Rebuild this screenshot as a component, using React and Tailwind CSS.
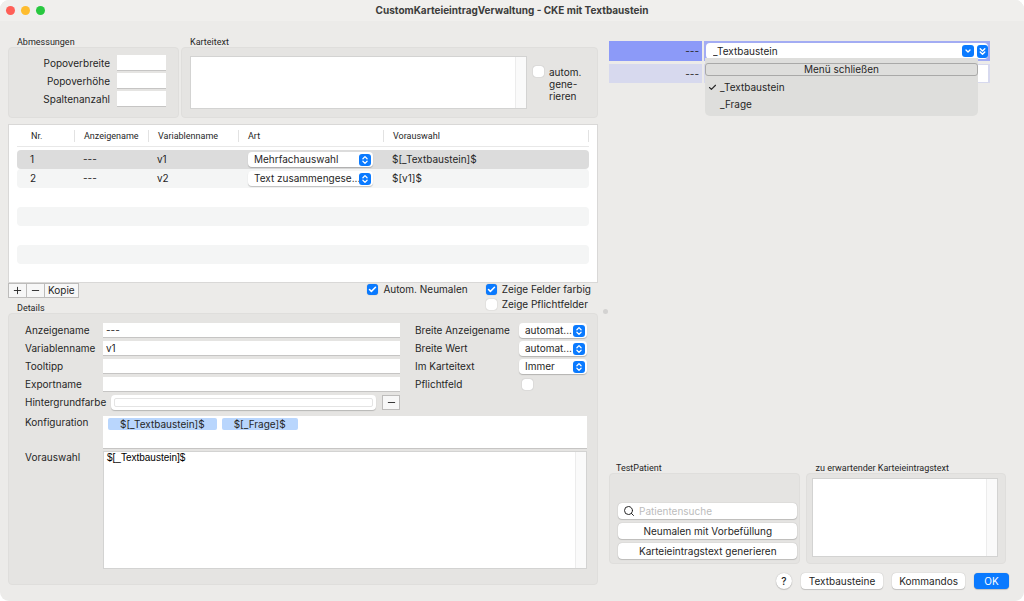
import { useState } from "react";
import { Check, ChevronDown, ChevronsDown, ChevronsUpDown, Minus, Plus, Search } from "lucide-react";
import clsx from "clsx";

const ROWS = [
  { nr: 1, anzeige: "---", variable: "v1", art: "Mehrfachauswahl", vorauswahl: "$[_Textbaustein]$" },
  { nr: 2, anzeige: "---", variable: "v2", art: "Text zusammengese...", vorauswahl: "$[v1]$" },
];

const EMPTY_ROWS = [3, 4, 5, 6];

const TOKENS = ["$[_Textbaustein]$", "$[_Frage]$"];

function Group({ title, className, titleClass, boxClass, children }) {
  return (
    <section className={clsx("flex flex-col", className)}>
      <h2 className={clsx("h-3 font-[Roboto,sans-serif] text-[9px] leading-[14px]", titleClass || "pl-[9px]")}>{title}</h2>
      <div className={clsx("flex-1 rounded-[4px] border border-[#dfdedc] bg-[#e5e4e2]", boxClass)}>{children}</div>
    </section>
  );
}

function TextField({ id, className, ...props }) {
  return (
    <input
      id={id}
      type="text"
      className={clsx("min-w-0 border-b border-[#c6c5c4] bg-white px-[3px] outline-none", className)}
      {...props}
    />
  );
}

function ScrollArea({ id, label, value, className }) {
  return (
    <div className={clsx("flex border border-[#d3d3d2] bg-white", className)}>
      <textarea
        id={id}
        aria-label={label}
        defaultValue={value}
        className="min-w-0 flex-1 resize-none overflow-hidden bg-white px-[3px] font-['Liberation_Sans',sans-serif] text-[10px] leading-3 text-black outline-none"
      />
      <div className="w-[11px] border-l border-[#ececec] bg-[#fafafa]" />
    </div>
  );
}

function PopUp({ id, label, options, className }) {
  return (
    <div className={clsx("relative", className)}>
      <select
        id={id}
        aria-label={label}
        className="block h-[15px] w-full appearance-none rounded-[4px] bg-white pl-[6px] pr-3 leading-[15px] shadow-[0_1px_1px_rgba(0,0,0,0.22)] outline-none"
      >
        {options.map((o) => (
          <option key={o}>{o}</option>
        ))}
      </select>
      <span className="pointer-events-none absolute right-[2px] top-[2px] flex h-3 w-3 items-center justify-center rounded-[3px] bg-[#0a7aff] text-white">
        <ChevronsUpDown size={10} strokeWidth={3} />
      </span>
    </div>
  );
}

function CheckBox({ id, checked, label, children }) {
  const [on, setOn] = useState(!!checked);
  return (
    <label htmlFor={id} className="flex gap-[5px]">
      <span className="relative h-[11px] w-[11px] shrink-0">
        <input
          id={id}
          type="checkbox"
          aria-label={label}
          checked={on}
          onChange={(e) => setOn(e.target.checked)}
          className="block h-[11px] w-[11px] appearance-none rounded-[3px] bg-white shadow-[0_0_1px_rgba(0,0,0,0.35)] checked:bg-[#0a7aff]"
        />
        {on && <Check size={9} strokeWidth={4} className="pointer-events-none absolute left-px top-px text-white" />}
      </span>
      {children}
    </label>
  );
}

function PushButton({ className, children }) {
  return (
    <button
      type="button"
      className={clsx(
        "flex h-4 items-center justify-center rounded-[4px] shadow-[0_0_1px_rgba(0,0,0,0.3),0_1px_1px_rgba(0,0,0,0.15)]",
        className
      )}
    >
      {children}
    </button>
  );
}

function TitleBar() {
  return (
    <header className="grid h-[21px] shrink-0 grid-cols-[1fr_auto_1fr] items-center bg-[#f0efed]">
      <div className="flex gap-[6px] pl-[6px]">
        <button type="button" aria-label="Schließen" className="h-[9px] w-[9px] rounded-full bg-[#ff5f57]" />
        <button type="button" aria-label="Minimieren" className="h-[9px] w-[9px] rounded-full bg-[#febc2e]" />
        <button type="button" aria-label="Vergrößern" className="h-[9px] w-[9px] rounded-full bg-[#28c840]" />
      </div>
      <h1 className="text-[10px] font-bold text-[#3c3c3b]">CustomKarteieintragVerwaltung - CKE mit Textbaustein</h1>
    </header>
  );
}

function VariablenTable() {
  return (
    <div className="mt-[6px] h-[159px] border border-[#d9d8d7] bg-white px-2">
      <table className="w-full table-fixed border-separate border-spacing-0">
        <colgroup>
          <col className="w-[58px]" />
          <col className="w-[74px]" />
          <col className="w-[90px]" />
          <col className="w-[145px]" />
          <col />
        </colgroup>
        <thead>
          <tr className="text-left font-[Roboto,sans-serif] text-[9px] [&>th]:h-[21px] [&>th]:p-0 [&>th]:font-normal [&>th>span]:block [&>th>span]:border-r [&>th>span]:border-[#e2e2e2] [&>th>span]:leading-3">
            <th><span className="pl-[14px]">Nr.</span></th>
            <th><span className="pl-[9px]">Anzeigename</span></th>
            <th><span className="pl-[9px]">Variablenname</span></th>
            <th><span className="pl-[9px]">Art</span></th>
            <th><span className="pl-[9px]">Vorauswahl</span></th>
          </tr>
          <tr aria-hidden="true">
            <td colSpan={5} className="h-1 border-t border-[#e8e8e8] p-0" />
          </tr>
        </thead>
        <tbody>
          {ROWS.map((r, i) => (
            <tr
              key={r.nr}
              className={clsx(
                "[&>td]:h-[19px] [&>td]:p-0 [&>td:first-child]:rounded-l-[4px] [&>td:last-child]:rounded-r-[4px]",
                i === 0 ? "bg-[#dcdcdc]" : "bg-[#f4f5f5]"
              )}
            >
              <td><span className="pl-[13px]">{r.nr}</span></td>
              <td><span className="pl-[8px]">{r.anzeige}</span></td>
              <td><span className="pl-[8px]">{r.variable}</span></td>
              <td>
                <PopUp label={`Art ${r.variable}`} options={[r.art]} className="ml-[9px] mr-[11px]" />
              </td>
              <td><span className="pl-[8px]">{r.vorauswahl}</span></td>
            </tr>
          ))}
          {EMPTY_ROWS.map((n) => (
            <tr key={n} className={n % 2 === 0 ? "bg-[#f4f5f5]" : "bg-white"}>
              <td colSpan={5} className="h-[19px] rounded-[4px] p-0" />
            </tr>
          ))}
        </tbody>
      </table>
    </div>
  );
}

function ListToolbar() {
  return (
    <div className="flex h-[18px] items-start justify-between pr-[7px]">
      <div className="flex h-[15px] divide-x divide-[#bdbcbb] border border-[#bdbcbb] bg-[#f7f7f7]">
        <button type="button" aria-label="Hinzufügen" className="flex w-[18px] items-center justify-center">
          <Plus size={11} />
        </button>
        <button type="button" aria-label="Entfernen" className="flex w-[18px] items-center justify-center">
          <Minus size={11} />
        </button>
        <button type="button" className="px-[3px] leading-[13px]">Kopie</button>
      </div>
      <div className="flex gap-[18px] pt-px leading-[11px]">
        <CheckBox id="neumalen" checked>Autom. Neumalen</CheckBox>
        <div className="flex flex-col gap-1">
          <CheckBox id="farbig" checked>Zeige Felder farbig</CheckBox>
          <CheckBox id="pflichtfelder">Zeige Pflichtfelder</CheckBox>
        </div>
      </div>
    </div>
  );
}

function Details() {
  return (
    <Group title="Details" className="flex-1" boxClass="flex flex-col pl-4 pr-[10px] pt-[9px] pb-[15px]">
      <div className="flex gap-[15px]">
        <div className="grid flex-1 auto-rows-[15px] grid-cols-[78px_1fr] gap-y-[3px] leading-[15px]">
          <label htmlFor="anzeigename">Anzeigename</label>
          <TextField id="anzeigename" defaultValue="---" />
          <label htmlFor="variablenname">Variablenname</label>
          <TextField id="variablenname" defaultValue="v1" />
          <label htmlFor="tooltipp">Tooltipp</label>
          <TextField id="tooltipp" />
          <label htmlFor="exportname">Exportname</label>
          <TextField id="exportname" />
          <span>Hintergrundfarbe</span>
          <div className="flex gap-[6px] pl-2">
            <button
              type="button"
              aria-label="Hintergrundfarbe"
              className="flex-1 rounded-[4px] bg-white p-[3px] shadow-[0_1px_1px_rgba(0,0,0,0.2)]"
            >
              <span className="block h-[9px] rounded-[2px] border border-[#e4e4e4]" />
            </button>
            <button
              type="button"
              aria-label="Farbe entfernen"
              className="flex w-[18px] items-center justify-center border border-[#bdbcbb] bg-[#f7f7f7]"
            >
              <Minus size={11} />
            </button>
          </div>
        </div>
        <div className="grid w-[172px] auto-rows-[15px] grid-cols-[104px_68px] content-start gap-y-[3px] leading-[15px]">
          <label htmlFor="breite-name">Breite Anzeigename</label>
          <PopUp id="breite-name" options={["automat..."]} />
          <label htmlFor="breite-wert">Breite Wert</label>
          <PopUp id="breite-wert" options={["automat..."]} />
          <label htmlFor="im-karteitext">Im Karteitext</label>
          <PopUp id="im-karteitext" options={["Immer"]} />
          <label htmlFor="pflichtfeld">Pflichtfeld</label>
          <div className="pl-[3px] pt-[2px]">
            <CheckBox id="pflichtfeld" />
          </div>
        </div>
      </div>
      <div className="mt-[6px] grid flex-1 grid-cols-[78px_1fr] grid-rows-[33px_1fr] gap-y-[2px] leading-3">
        <span>Konfiguration</span>
        <div className="flex items-start gap-[5px] border-b border-[#c6c5c4] bg-white px-[5px] pt-[2px]">
          {TOKENS.map((t) => (
            <span key={t} className="rounded-[2px] bg-[#b9d6fd] px-3">{t}</span>
          ))}
        </div>
        <label htmlFor="vorauswahl">Vorauswahl</label>
        <ScrollArea id="vorauswahl" value="$[_Textbaustein]$" />
      </div>
    </Group>
  );
}

function Vorschau() {
  const [open, setOpen] = useState(true);
  const [value, setValue] = useState("_Textbaustein");
  return (
    <div className="mr-[19px] mt-5 grid grid-cols-[93px_1fr] grid-rows-[20px_19px] gap-x-[2px] gap-y-[3px] leading-5">
      <label htmlFor="feld-1" className="bg-[#8c9af8] pr-[3px] text-right">---</label>
      <div className="relative bg-[#a3acf3] px-[2px] py-[2px]">
        <div className="flex h-4 items-center gap-[3px] rounded-[4px] bg-white">
          <input
            id="feld-1"
            value={value}
            onChange={(e) => setValue(e.target.value)}
            className="min-w-0 flex-1 bg-transparent pl-[7px] outline-none"
          />
          <button
            type="button"
            aria-label="Menü öffnen"
            onClick={() => setOpen(!open)}
            className="flex h-3 w-3 items-center justify-center rounded-[3px] bg-[#0a7aff] text-white"
          >
            <ChevronDown size={8} strokeWidth={4} />
          </button>
          <button
            type="button"
            aria-label="Alle anzeigen"
            className="flex h-[13px] w-[11px] items-center justify-center rounded-[3px] bg-[#0a7aff] text-white"
          >
            <ChevronsDown size={11} strokeWidth={3} />
          </button>
        </div>
        {open && (
          <div className="absolute left-px right-[12px] top-[17px] z-10 rounded-b-[5px] bg-[#dededc] pb-[3px] pt-[5px]">
            <button
              type="button"
              onClick={() => setOpen(false)}
              className="block h-[13px] w-full rounded-[3px] border border-[#a9a9a8] leading-[11px]"
            >
              Menü schließen
            </button>
            <ul className="pt-[3px] leading-[17px]">
              {["_Textbaustein", "_Frage"].map((o) => (
                <li key={o}>
                  <button type="button" onClick={() => setValue(o)} className="flex w-full items-center pl-[3px] text-left">
                    <span className="w-3">{o === value && <Check size={9} strokeWidth={3} />}</span>
                    {o}
                  </button>
                </li>
              ))}
            </ul>
          </div>
        )}
      </div>
      <label htmlFor="feld-2" className="bg-[#d7d9ee] pr-[3px] text-right">---</label>
      <div className="flex bg-[#d7d9ee] px-[2px] py-px">
        <input id="feld-2" className="min-w-0 flex-1 bg-white outline-none" />
      </div>
    </div>
  );
}

export default function App() {
  return (
    <div className="bg-white">
      <div className="flex min-h-screen flex-col overflow-hidden rounded-[9px] bg-[#ecebe9] font-[Inter,sans-serif] text-[10px] text-[#262626]">
        <TitleBar />
        <main className="grid flex-1 grid-cols-[minmax(0,590fr)_11px_minmax(0,400fr)] pl-2 pr-[15px]">
          <div className="flex flex-col pb-4 pt-[14px]">
            <div className="flex gap-[2px]">
              <Group title="Abmessungen" className="w-[171px]" boxClass="flex flex-col gap-[2px] py-[7px] pr-3">
                {["Popoverbreite", "Popoverhöhe", "Spaltenanzahl"].map((l) => (
                  <div key={l} className="flex h-4 items-center justify-end gap-[7px]">
                    <label htmlFor={l}>{l}</label>
                    <TextField id={l} className="h-4 w-[49px]" />
                  </div>
                ))}
              </Group>
              <Group title="Karteitext" className="flex-1" boxClass="flex gap-[6px] py-2 pl-2 pr-3">
                <ScrollArea label="Karteitext" className="h-[53px] flex-1" />
                <div className="w-[52px] pt-[10px] leading-[12px]">
                  <CheckBox id="autom">
                    <span>
                      autom.
                      <br />
                      gene-
                      <br />
                      rieren
                    </span>
                  </CheckBox>
                </div>
              </Group>
            </div>
            <VariablenTable />
            <ListToolbar />
            <Details />
          </div>

          <div className="flex items-center justify-center pl-1">
            <span className="h-[5px] w-[5px] rounded-full bg-[#d3d2d1]" />
          </div>

          <div className="flex flex-col pb-3">
            <Vorschau />
            <div className="mr-[3px] mt-auto flex gap-[6px]">
              <Group
                title="TestPatient"
                className="flex-[191]"
                titleClass="pl-[7px]"
                boxClass="flex flex-col gap-1 pb-1 pl-2 pr-[2px] pt-[29px]"
              >
                <div className="flex h-4 items-center gap-1 rounded-[4px] bg-white pl-[5px] shadow-[0_0_1px_rgba(0,0,0,0.3),0_1px_1px_rgba(0,0,0,0.15)]">
                  <Search size={12} />
                  <input
                    type="search"
                    aria-label="Patientensuche"
                    placeholder="Patientensuche"
                    className="min-w-0 flex-1 bg-transparent outline-none placeholder:text-[#bcbcbc]"
                  />
                </div>
                <PushButton className="bg-white">Neumalen mit Vorbefüllung</PushButton>
                <PushButton className="bg-white">Karteieintragstext generieren</PushButton>
              </Group>
              <Group
                title="zu erwartender Karteieintragstext"
                className="flex-[199]"
                boxClass="flex flex-col pb-[6px] pl-[5px] pr-[7px] pt-1"
              >
                <ScrollArea label="zu erwartender Karteieintragstext" className="flex-1" />
              </Group>
            </div>
            <footer className="mt-[9px] flex justify-end gap-[9px]">
              <PushButton className="w-4 rounded-full bg-white font-medium">?</PushButton>
              <PushButton className="bg-white px-2">Textbausteine</PushButton>
              <PushButton className="bg-white px-[7px]">Kommandos</PushButton>
              <PushButton className="w-[35px] bg-[#0a7aff] text-white">OK</PushButton>
            </footer>
          </div>
        </main>
      </div>
    </div>
  );
}
